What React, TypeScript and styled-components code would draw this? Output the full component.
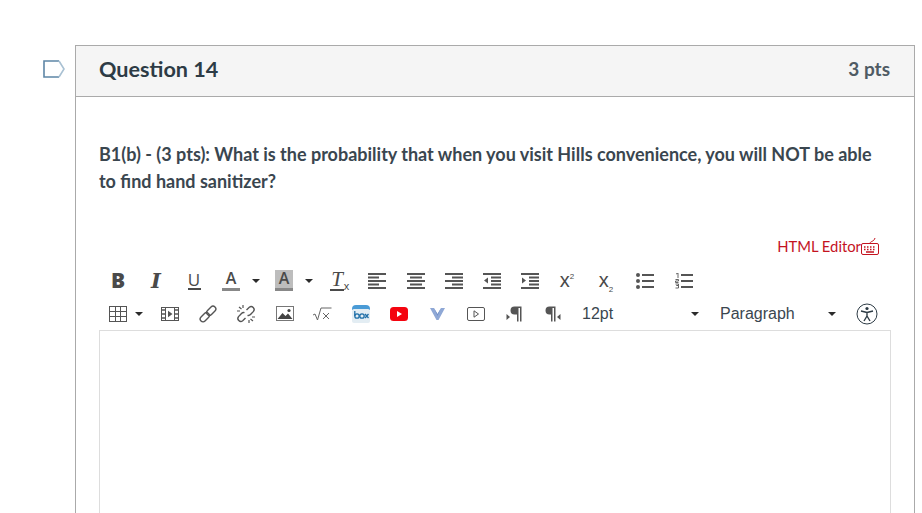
import React from 'react'
import styled, { createGlobalStyle } from 'styled-components'

const GlobalStyle = createGlobalStyle`
  html, body {
    margin: 0;
    padding: 0;
    background: #fff;
    overflow: hidden;
  }
  body {
    font-family: Lato, "Liberation Sans", sans-serif;
    color: #2d3b45;
  }
`

const Page = styled.div`
  display: flex;
  align-items: flex-start;
  height: 513px;
  overflow: hidden;
  padding: 45px 0 0 43px;
  box-sizing: border-box;
`

const Marker = styled.svg`
  flex: none;
  width: 22px;
  height: 18px;
  margin: 15px 10px 0 0;
`

const Card = styled.section`
  width: 840px;
  flex: none;
  box-sizing: border-box;
  border: 1px solid #aaa;
  border-bottom: 0;
`

const CardHeader = styled.header`
  display: flex;
  justify-content: space-between;
  align-items: center;
  height: 51px;
  box-sizing: border-box;
  padding: 0 24px 5px 23px;
  background: #f5f5f5;
  border-bottom: 1px solid #aaa;
`

const Title = styled.h2`
  margin: 0;
  font-size: 21.6px;
  font-weight: 700;
`

const Points = styled.div`
  font-size: 19px;
  font-weight: 700;
  color: #4f5b64;
`

const CardBody = styled.div`
  padding: 44px 23px 0;
`

const Prompt = styled.p`
  margin: 0;
  font-size: 18px;
  line-height: 27px;
  font-weight: 700;
  color: #3a464f;
`

const EditorLinkRow = styled.div`
  display: flex;
  justify-content: flex-end;
  align-items: center;
  height: 22px;
  margin: 40px 12px 0 0;
`

const EditorLink = styled.a`
  font-size: 14.8px;
  color: #c4131f;
`

const ToolRows = styled.div`
  margin-top: 7px;
`

const ToolRow = styled.div`
  display: flex;
  align-items: center;
  height: 33px;
`

const Tool = styled.span<{ $w?: number; $ml?: number }>`
  display: flex;
  align-items: center;
  justify-content: center;
  flex: none;
  position: relative;
  width: ${p => p.$w ?? 38}px;
  margin-left: ${p => p.$ml ?? 0}px;
  height: 24px;
  color: #4a4a4a;
`

const BoldGlyph = styled.span`
  font-family: "Open Sans", sans-serif;
  font-weight: 800;
  font-size: 21px;
  line-height: 1;
`

const ItalicGlyph = styled.span`
  font-family: "DejaVu Serif", serif;
  font-weight: 700;
  font-style: italic;
  font-size: 21px;
  line-height: 1;
`

const LetterGlyph = styled.span<{ $shade?: boolean }>`
  display: inline-block;
  width: 18px;
  text-align: center;
  font-family: "Open Sans", sans-serif;
  font-size: 16px;
  line-height: 17px;
  font-weight: 600;
  padding-bottom: 1px;
  border-bottom: 3px solid #888;
  background: ${p => (p.$shade ? '#bdbdbd' : 'transparent')};
`

const UnderGlyph = styled.span`
  display: inline-block;
  width: 13px;
  text-align: center;
  font-family: "Open Sans", sans-serif;
  font-size: 17px;
  line-height: 17px;
  border-bottom: 2px solid #4a4a4a;
`

const ClearGlyph = styled.span`
  font-family: "Liberation Serif", serif;
  font-style: italic;
  font-size: 21px;
  line-height: 19px;
  border-bottom: 2px solid #4a4a4a;
  padding: 0 1px;
  margin-right: 4px;
  small {
    position: absolute;
    font-style: normal;
    font-family: "Liberation Sans", sans-serif;
    font-size: 11px;
    line-height: 10px;
    margin-top: 11px;
    margin-left: 1px;
  }
`

const ScriptGlyph = styled.span`
  font-family: "Liberation Sans", sans-serif;
  font-size: 20px;
  line-height: 17px;
  sup, sub {
    font-size: 8px;
    line-height: 0;
  }
`

const Caret = styled.span`
  width: 0;
  height: 0;
  border-left: 4px solid transparent;
  border-right: 4px solid transparent;
  border-top: 4px solid #2b2b2b;
`

const SelectLabel = styled.span<{ $w: number; $ml: number }>`
  display: flex;
  align-items: center;
  flex: none;
  width: ${p => p.$w}px;
  margin-left: ${p => p.$ml}px;
  height: 24px;
  font-family: "Liberation Sans", sans-serif;
  font-size: 16px;
  color: #3a464f;
`

const EditorBox = styled.div`
  height: 400px;
  border: 1px solid #ddd;
`

const Bars = ({ kind }: { kind: 'left' | 'center' | 'right' | 'out' | 'in' }) => {
  const rows: [number, number][] =
    kind === 'left'
      ? [[0, 18], [0, 11], [0, 18], [0, 11], [0, 18]]
      : kind === 'center'
        ? [[0, 18], [3, 15], [0, 18], [3, 15], [0, 18]]
        : kind === 'right'
          ? [[0, 18], [7, 18], [0, 18], [7, 18], [0, 18]]
          : [[0, 18], [8, 18], [8, 18], [8, 18], [0, 18]]
  return (
    <svg width="18" height="16" viewBox="0 0 18 16">
      {rows.map(([a, b], i) => (
        <rect key={i} x={a} y={i * 3.5} width={b - a} height="2" fill="#555" />
      ))}
      {kind === 'out' && <path d="M5 4.500v6L1 7.500z" fill="#555" />}
      {kind === 'in' && <path d="M1 4.500v6l4-3z" fill="#555" />}
    </svg>
  )
}

const TableIcon = () => (
  <svg width="18" height="16" viewBox="0 0 18 16" fill="none" stroke="#555">
    <rect x=".5" y=".5" width="17" height="15" />
    <path d="M6.500 .5v15M11.500 .5v15M.5 5.500h17M.5 10.500h17" />
  </svg>
)

const MediaIcon = () => (
  <svg width="18" height="14" viewBox="0 0 18 14">
    <rect x=".5" y=".5" width="17" height="13" fill="none" stroke="#555" />
    <path d="M4.500 0v14M13.500 0v14" stroke="#555" />
    <path d="M1 3h3M1 7h3M1 11h3M14 3h3M14 7h3M14 11h3" stroke="#555" strokeWidth="1.400" />
    <path d="M7 3.800v6.400l4.500-3.200z" fill="#555" />
  </svg>
)

const LinkIcon = () => (
  <svg width="18" height="18" viewBox="0 0 18 18" fill="none" stroke="#555" strokeWidth="1.400">
    <rect x="7" y="3" width="10.500" height="5.600" rx="2.800" transform="rotate(-45 12.250 5.800)" />
    <rect x=".5" y="9.400" width="10.500" height="5.600" rx="2.800" transform="rotate(-45 5.750 12.200)" />
  </svg>
)

const UnlinkIcon = () => (
  <svg width="20" height="20" viewBox="0 0 20 20" fill="none" stroke="#555" strokeWidth="1.400">
    <path d="M10.500 6l2.800-2.800a3 3 0 0 1 4.200 4.200L14.500 10.500a3 3 0 0 1-3 .8" />
    <path d="M9.500 14l-2.800 2.800a3 3 0 0 1-4.200-4.200L5.500 9.500a3 3 0 0 1 3-.8" />
    <path d="M3 3l2.500 2M7 1v3M1 7h3M17 17l-2.500-2M13 19v-3M19 13h-3" strokeWidth="1.200" />
  </svg>
)

const ImageIcon = () => (
  <svg width="18" height="15" viewBox="0 0 18 15">
    <rect x=".5" y=".5" width="17" height="14" fill="none" stroke="#777" />
    <path d="M1.500 13l5-6 3 3 2.500-2.500L16.500 13z" fill="#444" />
    <circle cx="13" cy="4.500" r="1.600" fill="#444" />
  </svg>
)

const SqrtIcon = () => (
  <svg width="19" height="14" viewBox="0 0 19 14" fill="none" stroke="#666" strokeWidth="1">
    <path d="M0 8l2 -1 2.500 6L8 1h10.500" />
    <path d="M10 6l6 6M16 6l-6 6" />
  </svg>
)

const BoxIcon = () => (
  <svg width="18" height="18" viewBox="0 0 18 18">
    <path d="M0 4q0-4 4-4h10q4 0 4 4v1H0z" fill="#4a9bd6" />
    <rect y="4" width="18" height="14" rx="2" fill="#e3edf3" />
    <circle cx="5" cy="11" r="2.200" fill="none" stroke="#1f6fa8" strokeWidth="1.300" />
    <circle cx="10" cy="11" r="2.200" fill="none" stroke="#1f6fa8" strokeWidth="1.300" />
    <path d="M13 9l3.500 4M16.500 9L13 13M2.800 6v5" stroke="#1f6fa8" strokeWidth="1.300" />
  </svg>
)

const YoutubeIcon = () => (
  <svg width="18" height="14" viewBox="0 0 18 14">
    <rect width="18" height="14" rx="3.500" fill="#f4040f" />
    <path d="M7 4v6l5-3z" fill="#fff" />
  </svg>
)

const VimeoIcon = () => (
  <svg width="15" height="12" viewBox="0 0 15 12">
    <path d="M0 0h4l3.500 6L11 0h4L8.500 12h-2z" fill="#8fa8d6" />
    <path d="M4 0l3.500 6L11 0l-3.500 8z" fill="#6f8fc8" />
  </svg>
)

const PlayBoxIcon = () => (
  <svg width="18" height="14" viewBox="0 0 18 14" fill="none" stroke="#555">
    <rect x=".5" y=".5" width="17" height="13" rx="1.500" />
    <path d="M7 3.800v6.400l4.500-3.200z" />
  </svg>
)

const PilcrowIcon = ({ flip }: { flip?: boolean }) => (
  <svg width="17" height="16" viewBox="0 0 16 16" fill="#555">
    {flip ? (
      <>
        <path d="M1 4.500a4 4 0 0 1 4-4h6v15H9.500V2H8v13.500H6.500V8.500H5a4 4 0 0 1-4-4z" />
        <path d="M16 8v6l-3.500-3z" />
      </>
    ) : (
      <>
        <path d="M4 4.500a4 4 0 0 1 4-4h7v15h-1.500V2H12v13.500h-1.500V8.500H8a4 4 0 0 1-4-4z" />
        <path d="M0 8v6l3.500-3z" />
      </>
    )}
  </svg>
)

const BulletIcon = () => (
  <svg width="18" height="16" viewBox="0 0 18 16" fill="#555">
    <circle cx="2" cy="2" r="2" />
    <circle cx="2" cy="8" r="2" />
    <circle cx="2" cy="14" r="2" />
    <rect x="6" y="1" width="12" height="2" />
    <rect x="6" y="7" width="12" height="2" />
    <rect x="6" y="13" width="12" height="2" />
  </svg>
)

const NumberIcon = () => (
  <svg width="18" height="16" viewBox="0 0 18 16" fill="#555">
    <rect x="6" y="1" width="12" height="2" />
    <rect x="6" y="7" width="12" height="2" />
    <rect x="6" y="13" width="12" height="2" />
    <path d="M1 1l2-1v5M.5 6.500h3v1.500h-3v1.500h3M.5 11h3v1.500h-2h2v2.500h-3" fill="none" stroke="#555" strokeWidth=".9" />
  </svg>
)

const KeyboardIcon = () => (
  <svg width="18" height="18" viewBox="0 0 18 18" fill="none" stroke="#c4131f">
    <rect x=".5" y="6.500" width="17" height="11" rx="1.500" />
    <path d="M9 6.500C9 4 13 5 14 1" />
    <path d="M3 10h1.500M6 10h1.500M9 10h1.500M12 10h1.500M3 12.500h1.500M6 12.500h1.500M9 12.500h1.500M12 12.500h1.500M5 15h8" strokeWidth="1.300" />
  </svg>
)

const AccessIcon = () => (
  <svg width="22" height="22" viewBox="0 0 22 22" fill="none" stroke="#2d3b45">
    <circle cx="11" cy="11" r="10" />
    <circle cx="11" cy="5.500" r="1.600" fill="#2d3b45" stroke="none" />
    <path d="M5 8l6 1.500L17 8M11 9.500V13M8 18l3-5 3 5" strokeWidth="1.400" />
  </svg>
)

export default function App() {
  return (
    <>
      <GlobalStyle />
      <Page>
        <Marker viewBox="0 0 22 18">
          <path d="M16 1H1v16h15" fill="#fff" stroke="#5e86a6" strokeWidth="1.600" />
          <path d="M16 1l5 8-5 8" fill="#fff" stroke="#a9c1d3" strokeWidth="1.600" />
        </Marker>
        <Card>
          <CardHeader>
            <Title>Question 14</Title>
            <Points>3 pts</Points>
          </CardHeader>
          <CardBody>
            <Prompt>
              B1(b) - (3 pts): What is the probability that when you visit Hills convenience, you will NOT be able to find hand sanitizer?
            </Prompt>
            <EditorLinkRow>
              <EditorLink>HTML Editor</EditorLink>
              <KeyboardIcon />
            </EditorLinkRow>
            <ToolRows>
              <ToolRow>
                <Tool><BoldGlyph>B</BoldGlyph></Tool>
                <Tool><ItalicGlyph>I</ItalicGlyph></Tool>
                <Tool><UnderGlyph>U</UnderGlyph></Tool>
                <Tool $w={36}><LetterGlyph>A</LetterGlyph></Tool>
                <Tool $w={14}><Caret /></Tool>
                <Tool $w={42}><LetterGlyph $shade>A</LetterGlyph></Tool>
                <Tool $w={8}><Caret /></Tool>
                <Tool $ml={7}><ClearGlyph>T<small>x</small></ClearGlyph></Tool>
                <Tool><Bars kind="left" /></Tool>
                <Tool $ml={1}><Bars kind="center" /></Tool>
                <Tool><Bars kind="right" /></Tool>
                <Tool><Bars kind="out" /></Tool>
                <Tool><Bars kind="in" /></Tool>
                <Tool $ml={-1}><ScriptGlyph>x<sup>2</sup></ScriptGlyph></Tool>
                <Tool $ml={1}><ScriptGlyph>x<sub>2</sub></ScriptGlyph></Tool>
                <Tool $ml={1}><BulletIcon /></Tool>
                <Tool $ml={1}><NumberIcon /></Tool>
              </ToolRow>
              <ToolRow>
                <Tool><TableIcon /></Tool>
                <Tool $w={14} $ml={-5}><Caret /></Tool>
                <Tool $ml={5}><MediaIcon /></Tool>
                <Tool><LinkIcon /></Tool>
                <Tool><UnlinkIcon /></Tool>
                <Tool $ml={1}><ImageIcon /></Tool>
                <Tool $ml={-1}><SqrtIcon /></Tool>
                <Tool $ml={1}><BoxIcon /></Tool>
                <Tool><YoutubeIcon /></Tool>
                <Tool><VimeoIcon /></Tool>
                <Tool $ml={1}><PlayBoxIcon /></Tool>
                <Tool><PilcrowIcon /></Tool>
                <Tool><PilcrowIcon flip /></Tool>
                <SelectLabel $w={109} $ml={11}>12pt</SelectLabel>
                <Tool $w={8}><Caret /></Tool>
                <SelectLabel $w={108} $ml={21}>Paragraph</SelectLabel>
                <Tool $w={8}><Caret /></Tool>
                <Tool $w={22} $ml={20}><AccessIcon /></Tool>
              </ToolRow>
            </ToolRows>
            <EditorBox />
          </CardBody>
        </Card>
      </Page>
    </>
  )
}
